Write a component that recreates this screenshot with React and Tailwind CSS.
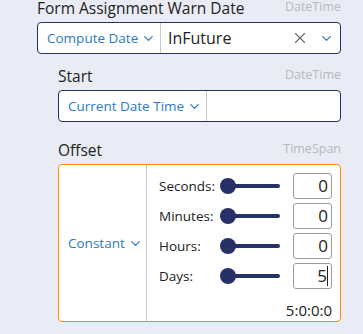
import React from 'react';
import { ChevronDown, X } from 'lucide-react';

const font = { fontFamily: '"Open Sans", "Lato", sans-serif' };

function Chevron({ className = '' }) {
  return <ChevronDown size={15} strokeWidth={2} className={`text-[#2b7bc4] ${className}`} />;
}

function FieldLabel({ label, type }) {
  return (
    <div className="flex justify-between items-end h-[22px] pb-[6px]">
      <span className="text-[15.5px] leading-none text-[#222]">{label}</span>
      <span className="text-[12.5px] leading-none text-[#b7b9bf] mb-[3px]">{type}</span>
    </div>
  );
}

function SliderRow({ label, value, caret }) {
  return (
    <div className="flex items-center h-[26px]">
      <span className="w-[61px] text-[13.5px] text-[#222]">{label}</span>
      <div className="relative w-[60px] h-[16px] flex items-center">
        <div className="absolute left-[8px] right-0 h-[4px] rounded-full bg-[#263165]" />
        <div className="absolute left-0 w-[16px] h-[16px] rounded-full bg-[#263165]" />
      </div>
      <div className="ml-auto w-[39px] h-[26px] border border-[#9a9a9a] rounded-[3px] flex items-center justify-end pr-[3px] text-[17px] text-[#222]">
        {value}
        {caret && <span className="w-px h-[20px] bg-[#222]" />}
      </div>
    </div>
  );
}

export default function App() {
  return (
    <div className="w-[363px] h-[334px] bg-[#e9ecf4] pl-[37px] pr-[22px] overflow-hidden" style={font}>
      <FieldLabel label="Form Assignment Warn Date" type="DateTime" />
      <div className="flex h-[32px] bg-white border border-[#263165] rounded-[4px]">
        <div className="w-[123px] flex items-center pl-[9px] gap-[3px] border-r border-[#c8c8c8]">
          <span className="text-[13.5px] text-[#2b7bc4]">Compute Date</span>
          <Chevron />
        </div>
        <div className="flex-1 flex items-center pl-[7px] pr-[6px]">
          <span className="text-[16px] text-[#222] flex-1">InFuture</span>
          <X size={18} strokeWidth={1.5} className="text-[#666] mr-[10px]" />
          <Chevron />
        </div>
      </div>

      <div className="ml-[21px] mt-[14px]">
        <FieldLabel label="Start" type="DateTime" />
        <div className="flex h-[32px] bg-white border border-[#263165] rounded-[4px]">
          <div className="w-[148px] flex items-center pl-[9px] gap-[3px] border-r border-[#c8c8c8]">
            <span className="text-[13.5px] text-[#2b7bc4]">Current Date Time</span>
            <Chevron />
          </div>
          <div className="flex-1" />
        </div>

        <div className="mt-[20px]">
          <FieldLabel label="Offset" type="TimeSpan" />
        </div>
        <div className="flex h-[158px] shrink-0 bg-white border border-[#ff8a00] rounded-[4px]">
          <div className="w-[88px] flex items-center pl-[9px] gap-[3px] border-r border-[#c8c8c8]">
            <span className="text-[13.5px] text-[#2b7bc4]">Constant</span>
            <Chevron />
          </div>
          <div className="flex-1 flex flex-col pt-[8px] pl-[12px] pr-[8px] gap-[4px]">
            <SliderRow label="Seconds:" value="0" />
            <SliderRow label="Minutes:" value="0" />
            <SliderRow label="Hours:" value="0" />
            <SliderRow label="Days:" value="5" caret />
            <div className="text-right text-[15px] text-[#222] mt-[6px]">5:0:0:0</div>
          </div>
        </div>
      </div>
    </div>
  );
}
